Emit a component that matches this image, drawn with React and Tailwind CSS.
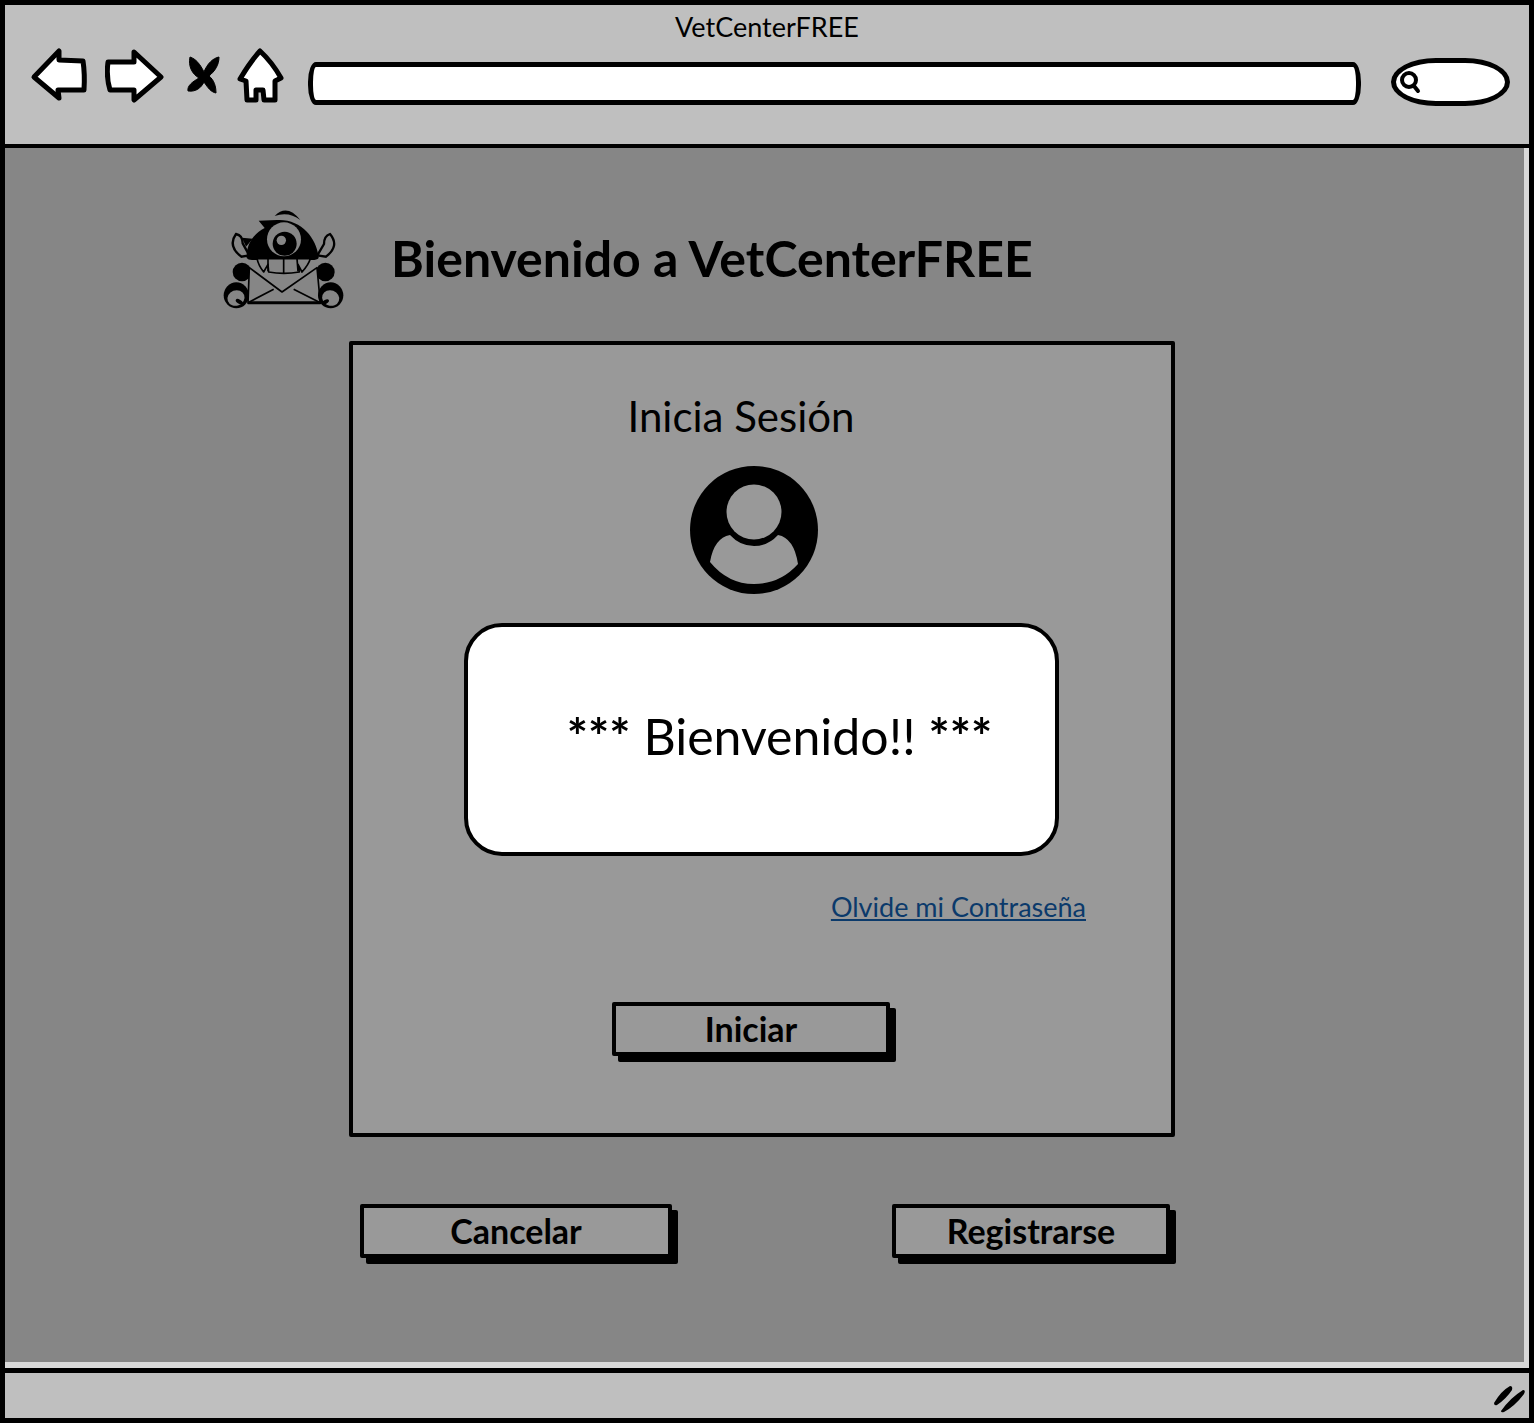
import React from "react";

function BackIcon() {
  return (
    <svg className="w-[60px] h-[56px] shrink-0" viewBox="30 45 60 56">
      <path d="M34 75 L59 49 L59 58 L83 59 Q85 72 84 88 L58 88 L59 96 Z" fill="#fff" stroke="#000" strokeWidth="5" strokeLinejoin="round" />
    </svg>
  );
}

function ForwardIcon() {
  return (
    <svg className="w-[60px] h-[56px] shrink-0" viewBox="105 45 60 56">
      <path d="M108 60 L134 60 L134 50 L161 75 L134 98 L134 88 L110 88 Q106 75 108 60 Z" fill="#fff" stroke="#000" strokeWidth="5" strokeLinejoin="round" />
    </svg>
  );
}

function StopIcon() {
  return (
    <svg className="w-[34px] h-[40px] shrink-0" viewBox="187 51 34 40">
      <path d="M204 68 C200 60 196 55 190 53 C188 62 192 70 199 74 C192 78 187 82 188 87 C196 88 201 84 204 78 C208 84 211 88 216 89 C216 82 214 76 209 72 C215 67 219 61 219 53 C213 54 207 60 204 68 Z" fill="#000" stroke="#000" strokeWidth="1" />
    </svg>
  );
}

function HomeIcon() {
  return (
    <svg className="w-[48px] h-[56px] shrink-0" viewBox="236 45 48 56">
      <path d="M260 49 Q272 60 281 76 L275 79 L275 98 L264 98 L263 88 L256 88 L256 98 L247 98 L246 79 L240 77 Q250 60 260 49 Z" fill="#fff" stroke="#000" strokeWidth="5" strokeLinejoin="round" />
    </svg>
  );
}

function SearchGlass() {
  return (
    <svg className="w-[26px] h-[30px] shrink-0" viewBox="0 0 26 30">
      <circle cx="12" cy="12" r="7" fill="none" stroke="#000" strokeWidth="4" />
      <path d="M17 18 L21 23" stroke="#000" strokeWidth="4" strokeLinecap="round" />
    </svg>
  );
}

function MonsterLogo() {
  const bg = "#868686";
  return (
    <svg className="w-[124px] h-[104px] shrink-0" viewBox="40 30 372 312">
      <path d="M198 60 Q235 22 275 72 Q240 46 198 60 Z" fill="#000" />
      <path d="M98 182 Q56 150 82 114 Q102 118 102 142 L122 178 Z" fill={bg} stroke="#000" strokeWidth="7" />
      <path d="M352 182 Q394 150 364 114 Q346 120 346 144 L326 178 Z" fill={bg} stroke="#000" strokeWidth="7" />
      <path d="M114 186 C112 150 130 116 168 96 L150 74 L205 72 C280 68 326 130 330 186 Q325 192 310 192 L130 192 Q118 192 114 186 Z" fill="#000" />
      <path d="M100 125 L132 128 L112 152 Z" fill="#000" />
      <circle cx="226" cy="130" r="51" fill={bg} />
      <circle cx="228" cy="143" r="36" fill="#000" />
      <circle cx="218" cy="133" r="14" fill={bg} />
      <circle cx="100" cy="228" r="28" fill="#000" />
      <circle cx="350" cy="228" r="28" fill="#000" />
      <path d="M122 215 L220 288 L325 215 L335 322 L118 322 Z" fill={bg} stroke="#000" strokeWidth="5" strokeLinejoin="round" />
      <path d="M118 320 L195 280 M335 320 L255 280" stroke="#000" strokeWidth="5" />
      <path d="M120 320 L335 320" stroke="#000" strokeWidth="8" />
      <path d="M145 188 L305 188 Q300 205 280 228 L268 205 L272 228 Q225 236 180 228 L178 205 L165 228 Q150 210 145 188 Z" fill={bg} stroke="#000" strokeWidth="5" strokeLinejoin="round" />
      <path d="M178 188 L178 226 M225 188 L225 232 M265 188 L268 226" stroke="#000" strokeWidth="5" />
      <ellipse cx="83" cy="298" rx="38" ry="39" fill="#000" />
      <ellipse cx="82" cy="306" rx="26" ry="23" fill={bg} transform="rotate(-20 82 306)" />
      <ellipse cx="92" cy="317" rx="12" ry="6" fill="#000" transform="rotate(30 92 317)" />
      <ellipse cx="366" cy="298" rx="38" ry="39" fill="#000" />
      <ellipse cx="366" cy="306" rx="26" ry="23" fill={bg} transform="rotate(20 366 306)" />
      <ellipse cx="350" cy="318" rx="12" ry="6" fill="#000" transform="rotate(-30 350 318)" />
    </svg>
  );
}

function UserAvatar() {
  return (
    <svg className="w-[128px] h-[128px] block" viewBox="0 0 128 128">
      <circle cx="64" cy="64" r="64" fill="#000" />
      <circle cx="64" cy="46" r="27.5" fill="#999999" />
      <path d="M20 96 Q24 72 40 69 Q50 80 64 80 Q78 80 88 69 Q104 72 108 98 Q90 118 64 118 Q38 118 20 96 Z" fill="#999999" />
    </svg>
  );
}

function ResizeGrip() {
  return (
    <svg className="w-[34px] h-[28px]" viewBox="0 0 34 28">
      <path d="M1 18 Q8 6 17 1 Q20 1 19 5 Q13 14 4 20 Q1 21 1 18 Z M8 26 Q17 13 30 5 Q33 5 31 9 Q22 21 11 27 Q8 28 8 26 Z" fill="#000" />
    </svg>
  );
}

function SketchButton({ label, className }) {
  return (
    <button className={`h-[54px] bg-[#999999] border-4 border-black rounded-[2px] shadow-[6px_6px_0_#000] text-[34px] font-bold text-black leading-none flex items-center justify-center ${className}`}>
      {label}
    </button>
  );
}

export default function App() {
  return (
    <div className="w-[1536px] h-[1424px] bg-white font-['Lato',sans-serif] text-black overflow-hidden">
      <div className="w-[1534px] h-[1423px] border-[5px] border-black flex flex-col">

        {/* barra del navegador */}
        <div className="h-[143px] shrink-0 bg-[#bfbfbf] border-b-[4px] border-black flex flex-col">
          <div className="text-[27px] leading-[32px] text-center mt-[6px]">VetCenterFREE</div>
          <div className="flex items-center ml-[25px] mt-[1px]">
            <BackIcon />
            <div className="w-[15px]" />
            <ForwardIcon />
            <div className="w-[22px]" />
            <StopIcon />
            <div className="w-[15px]" />
            <HomeIcon />
            <div className="w-[24px]" />
            <div className="w-[1053px] h-[43px] mt-[16px] bg-white border-[5px] border-black rounded-[8px/20px]" />
            <div className="w-[30px]" />
            <div className="w-[119px] h-[48px] mt-[14px] bg-white border-[5px] border-black rounded-[45px/24px] flex items-center pl-[1px] pt-[1px]">
              <SearchGlass />
            </div>
          </div>
        </div>

        {/* contenido */}
        <div className="flex-1 min-h-0 bg-[#868686] border-r-[5px] border-b-[6px] border-[#d9d9d9] flex flex-col">
          <div className="flex items-center ml-[217px] mt-[60px] h-[100px]">
            <MonsterLogo />
            <h1 className="ml-[45px] text-[50px] font-bold leading-none">Bienvenido a VetCenterFREE</h1>
          </div>

          <div className="ml-[344px] mt-[33px] w-[826px] h-[796px] bg-[#999999] border-4 border-black rounded-[2px] flex flex-col items-center">
            <h2 className="text-[42px] leading-[46px] mt-[48px] mr-[42px] font-normal">Inicia Sesión</h2>
            <div className="mt-[27px] mr-[16px]">
              <UserAvatar />
            </div>
            <div className="mt-[29px] mr-[2px] w-[595px] h-[233px] bg-white border-4 border-black rounded-[38px] flex items-center justify-center pb-[7px]">
              <span className="text-[50px] leading-none ml-[37px]"><span className="font-bold">***</span> Bienvenido!! <span className="font-bold">***</span></span>
            </div>
            <div className="self-end mr-[85px] mt-[35px]">
              <a href="#" className="text-[27px] leading-[32px] text-[#0b3a6b] underline">Olvide mi Contraseña</a>
            </div>
            <SketchButton label="Iniciar" className="w-[278px] mt-[79px] -ml-[22px]" />
          </div>

          <div className="flex ml-[355px] mt-[67px]">
            <SketchButton label="Cancelar" className="w-[312px]" />
            <SketchButton label="Registrarse" className="w-[278px] ml-[220px]" />
          </div>
        </div>

        {/* barra inferior */}
        <div className="h-[50px] shrink-0 bg-[#bfbfbf] border-t-[5px] border-black flex items-end justify-end pr-[2px] pb-[5px]">
          <ResizeGrip />
        </div>
      </div>
    </div>
  );
}
